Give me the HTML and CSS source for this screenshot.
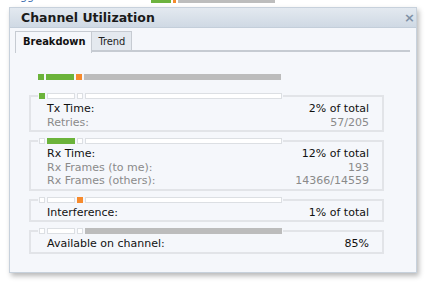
FILE: index.html
```html
<!DOCTYPE html>
<html>
<head>
<meta charset="utf-8">
<link rel="stylesheet" href="styles.css">
</head>
<body>
<div class="page">
  <div class="bg-row">
    <span class="bg-link bg-left">gg</span>
    <span class="bg-bar"><i class="g"></i><i class="o"></i><i class="r"></i></span>
    <span class="bg-pct">23%</span>
    <span class="bg-link bg-right">info</span>
  </div>
</div>

<div class="dialog">
  <div class="dlg-head">
    <span class="dlg-title">Channel Utilization</span>
    <span class="dlg-close">×</span>
  </div>
  <div class="dlg-body">
    <div class="tabs">
      <div class="tab active">Breakdown</div>
      <div class="tab">Trend</div>
    </div>

    <div class="summary">
      <span class="seg s-tx green"></span>
      <span class="seg s-rx green"></span>
      <span class="seg s-if orange"></span>
      <span class="seg s-av gray"></span>
    </div>

    <fieldset class="group">
      <legend class="bar">
        <span class="seg s-tx green"></span>
        <span class="seg s-rx empty"></span>
        <span class="seg s-if empty"></span>
        <span class="seg s-av empty"></span>
      </legend>
      <div class="row main"><span>Tx Time:</span><span>2% of total</span></div>
      <div class="row sub"><span>Retries:</span><span>57/205</span></div>
    </fieldset>

    <fieldset class="group">
      <legend class="bar">
        <span class="seg s-tx empty"></span>
        <span class="seg s-rx green"></span>
        <span class="seg s-if empty"></span>
        <span class="seg s-av empty"></span>
      </legend>
      <div class="row main"><span>Rx Time:</span><span>12% of total</span></div>
      <div class="row sub"><span>Rx Frames (to me):</span><span>193</span></div>
      <div class="row sub"><span>Rx Frames (others):</span><span>14366/14559</span></div>
    </fieldset>

    <fieldset class="group">
      <legend class="bar">
        <span class="seg s-tx empty"></span>
        <span class="seg s-rx empty"></span>
        <span class="seg s-if orange"></span>
        <span class="seg s-av empty"></span>
      </legend>
      <div class="row main"><span>Interference:</span><span>1% of total</span></div>
    </fieldset>

    <fieldset class="group">
      <legend class="bar">
        <span class="seg s-tx empty"></span>
        <span class="seg s-rx empty"></span>
        <span class="seg s-if empty"></span>
        <span class="seg s-av gray"></span>
      </legend>
      <div class="row main"><span>Available on channel:</span><span>85%</span></div>
    </fieldset>
  </div>
</div>
</body>
</html>
```

FILE: styles.css
```css
html, body {
  margin: 0;
  padding: 0;
  background: #ffffff;
  font-family: "DejaVu Sans", Verdana, sans-serif;
  font-size: 11px;
  color: #111;
}

.page {
  height: 288px;
  overflow: hidden;
}

.bg-row {
  display: flex;
  align-items: flex-end;
  height: 3px;
  overflow: hidden;
  font-size: 11px;
  line-height: 12px;
}
.bg-row > * { flex: none; }
.bg-left { margin-left: 20px; color: #3d6fb0; width: 14px; height: 12px; }
.bg-bar {
  display: flex;
  gap: 2px;
  margin-left: 117px;
  height: 12px;
}
.bg-bar i { display: block; height: 12px; }
.bg-bar .g { width: 20px; background: #6db33f; }
.bg-bar .o { width: 3px; background: #f58b2c; }
.bg-bar .r { width: 97px; background: #bdbdbd; }
.bg-pct { margin-left: 84px; width: 30px; height: 12px; color: #111; }
.bg-right { margin-left: 3px; height: 12px; color: #8fc1ea; }

.dialog {
  position: absolute;
  left: 9px;
  top: 7px;
  width: 406px;
  height: 264px;
  border: 1px solid #c7d1dc;
  background: #f5f7fb;
  box-shadow: 2px 3px 5px rgba(0, 0, 0, 0.28);
  display: flex;
  flex-direction: column;
}

.dlg-head {
  height: 19px;
  display: flex;
  align-items: center;
  justify-content: space-between;
  padding: 0 1px 0 11px;
  background: linear-gradient(#e3e9f0, #cfd9e4);
  border-bottom: 1px solid #c3ceda;
}
.dlg-title {
  font-weight: bold;
  font-size: 12.5px;
  color: #1a1a1a;
}
.dlg-close {
  color: #7f91a6;
  font-size: 13px;
  font-weight: bold;
  line-height: 13px;
}

.dlg-body {
  padding: 3px 6px 0 5px;
}

.tabs {
  display: flex;
  height: 19px;
  border-bottom: 2px solid #c6cbd2;
}
.tab {
  padding: 0 6px;
  line-height: 19px;
  border: 1px solid #c6cbd2;
  border-bottom: none;
  background: #e4e9ef;
  color: #222;
  font-family: "DejaVu Sans Condensed", "DejaVu Sans", sans-serif;
  font-size: 11px;
}
.tab.active {
  padding: 0 6px 0 7px;
  background: #f5f7fb;
  font-weight: bold;
  color: #111;
  margin-bottom: -2px;
  height: 21px;
}
.tab + .tab { border-left: none; }

.summary {
  display: flex;
  gap: 2px;
  margin: 22px 0 0 23px;
  height: 6px;
}

.seg {
  display: block;
  height: 6px;
  box-sizing: border-box;
}
.s-tx { width: 6px; }
.s-rx { width: 28px; }
.s-if { width: 6px; }
.s-av { width: 197px; }
.green { background: #6bb33a; }
.orange { background: #f68a2d; }
.gray { background: #bcbcbc; }
.empty { background: #ffffff; border: 1px solid #dcdfe3; }

.group {
  margin: 13px 26px 0 14px;
  padding: 3px 13px 1px 16px;
  border: 2px solid #e2e4e8;
  min-width: 0;
}
.group + .group { margin-top: 6px; }

.bar {
  display: flex;
  gap: 2px;
  padding: 0 1px;
  margin-left: -9px;
  height: 6px;
}

.row {
  display: flex;
  justify-content: space-between;
  line-height: 13.5px;
  font-size: 11px;
}
.row.main { color: #111; }
.row.sub { color: #8a8a8a; }
```
